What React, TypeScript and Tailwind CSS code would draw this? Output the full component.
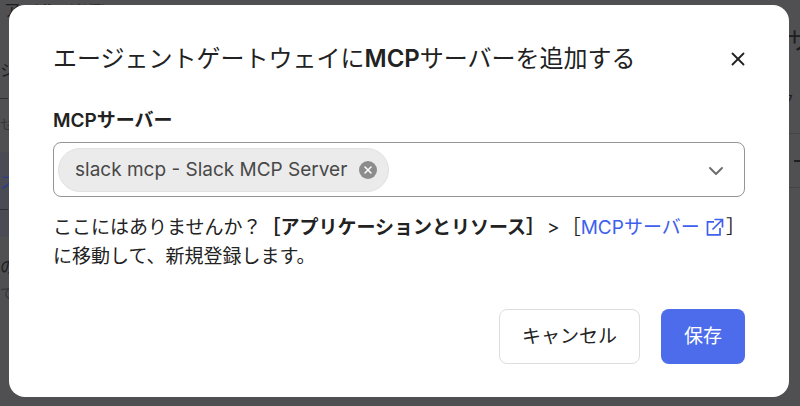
import { ChevronDown, X } from 'lucide-react'

const ExternalIcon = () => (
    <svg width="18" height="18" viewBox="0 0 18 18" fill="none" stroke="currentColor" strokeWidth="1.7" className="mr-0.5 ml-px inline align-[-2px]" aria-hidden="true">
        <path d="M8 3.8H1.5V16.8H14V10" />
        <path d="M8.5 1.5H16.5V9.5M16.5 1.5L6.5 11.5" />
    </svg>
)

// Page that stays visible around the dialog
const Backdrop = () => (
    <div className="col-start-1 row-start-1 flex justify-between overflow-hidden text-base leading-6 text-[#1e1e20]" aria-hidden="true">
        <div className="w-40 whitespace-nowrap">
            <div className="flex h-5 items-center pl-1">
                ア<span className="ml-1">イル</span>
                <span className="ml-3 text-sm text-[#303033]">(必須)</span>
            </div>
            <div className="mt-[38px] h-6">シ</div>
            <div className="flex h-8 items-center">
                <div className="h-px w-2 bg-[#2f2f31]" />
            </div>
            <div className="flex h-5 items-center text-sm text-[#353537]">せ</div>
            <div className="mt-[18px] h-[85px] bg-[#4a4b55] pt-[18px]">
                <div className="h-6 text-[#2a3b88]">ス</div>
                <div className="flex h-[30px] items-center">
                    <div className="h-px w-2 bg-[#303033]" />
                </div>
            </div>
            <div className="mt-[18px] h-6">の</div>
            <div className="mt-1 h-6 text-sm text-[#353537]">て</div>
        </div>
        <div className="w-5 overflow-hidden whitespace-nowrap">
            <div className="mt-[29px] h-6 pl-[7px] text-2xl leading-6">サ</div>
            <div className="mt-9 flex h-5 items-center text-sm">ク</div>
            <div className="mt-6 flex h-[55px] items-center border-y border-[#444446] pl-3.5">
                <div className="h-0.5 w-full bg-[#1e1e20]" />
            </div>
        </div>
    </div>
)

const App = () => {
    return (
        <div className="grid min-h-screen bg-[#505052] font-['Inter','Noto_Sans_CJK_JP',sans-serif] text-[#222]" lang="ja">
            <Backdrop />
            <div className="z-10 col-start-1 row-start-1 flex flex-col pt-[5px] pr-[11px] pb-[9px] pl-[9px]">
                <div role="dialog" aria-labelledby="dialog-title" className="grow rounded-2xl bg-white px-11 pt-9">
                    <header className="flex items-center justify-between">
                        <h1 id="dialog-title" className="text-2xl leading-9">
                            エージェントゲートウェイに<span className="font-semibold">MCP</span>サーバーを追加する
                        </h1>
                        <button aria-label="閉じる" className="-mr-1">
                            <X size={22} strokeWidth={2} />
                        </button>
                    </header>

                    <label htmlFor="server" className="mt-[30px] block text-[19px] leading-7 font-semibold">
                        MCPサーバー
                    </label>
                    <div className="mt-[7px] flex h-[55px] items-center rounded-lg border border-[#949494] pr-4 pl-1">
                        <span className="flex h-11 items-center gap-3 rounded-full border border-[#e2e2e2] bg-[#ebebeb] pr-[11px] pl-4 text-[19px] text-[#484848]">
                            <span className="pt-0.5">slack mcp - Slack MCP Server</span>
                            <button aria-label="削除" className="grid size-[18px] place-items-center rounded-full bg-[#8c8c8c] text-white">
                                <X size={12} strokeWidth={3} />
                            </button>
                        </span>
                        <input id="server" role="combobox" className="min-w-0 grow outline-none" />
                        <ChevronDown size={24} strokeWidth={2} className="mt-0.5 text-[#6e6e6e]" />
                    </div>

                    <p className="mt-4 text-[19px] leading-[29px]">
                        ここにはありませんか？<strong>［アプリケーションとリソース］</strong>
                        <span className="mx-0.5">&gt;</span>［
                        <a href="#servers" className="text-[#3f5fee]">
                            MCPサーバー <ExternalIcon />
                        </a>
                        ］に移動して、新規登録します。
                    </p>

                    <footer className="mt-[38px] flex justify-end gap-[21px]">
                        <button className="h-[55px] rounded-lg border border-[#ddd] px-[22px] pt-0.5 text-[19px]">キャンセル</button>
                        <button className="h-[55px] rounded-lg bg-[#4c6cec] px-[23px] pt-0.5 text-[19px] text-white">保存</button>
                    </footer>
                </div>
            </div>
        </div>
    )
}

export default App
